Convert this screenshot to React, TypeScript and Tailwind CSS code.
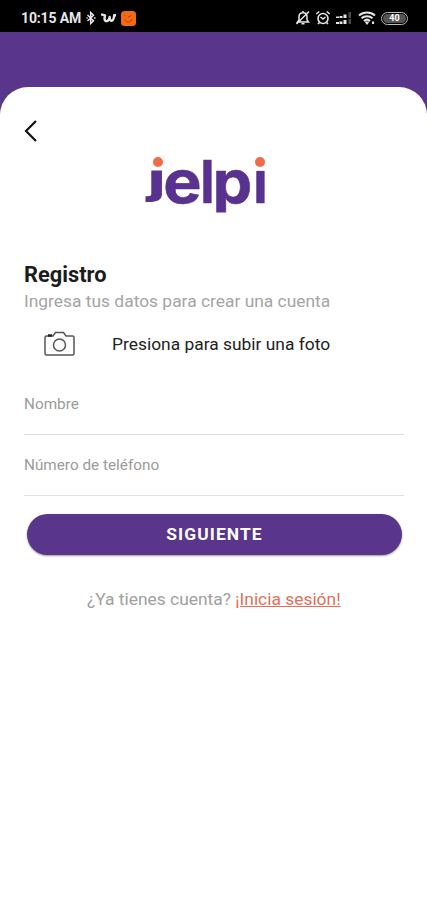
import React,{useState} from 'react';

const StatusBar:React.FC=()=>{
    return(
        <div className="flex h-8 items-center bg-black pt-1 pl-[21px] text-[#e6e6e6]">
            <div className="w-[60px] text-[14px] leading-none font-bold tracking-[-0.15px] whitespace-nowrap">10:15 AM</div>
            <svg className="ml-[5px] h-[14px] w-[10px]" viewBox="0 0 10 14" fill="none" stroke="currentColor" strokeWidth="1.5">
                <path d="M1.5 4l6 5.7L4.7 12.500V1.500L7.500 4.300L1.500 10M0.500 7h1.200M8 7h1.500"/>
            </svg>
            <svg className="ml-[5px] h-[10px] w-[15px]" viewBox="0 0 15 10" fill="none" stroke="currentColor" strokeWidth="2.400" strokeLinejoin="round">
                <path d="M0 1.300L4 2.300L3.500 5.500C3.500 9.500 8 9 8.700 4C8.500 9.300 12.500 9.300 13.200 2.300H15"/>
            </svg>
            <svg className="ml-[5px] h-[15px] w-[15px]" viewBox="0 0 15 15" fill="none">
                <rect width="15" height="15" rx="3.500" fill="#f26a13"/>
                <path d="M3.800 5.200v-1M4 8.500c1 3.500 6 3.500 7-.5M7 6.500l3.500-2.300" stroke="#a83c08" strokeWidth="1"/>
            </svg>
            <svg className="ml-[159px] h-4 w-4" viewBox="0 0 16 16" fill="none" stroke="currentColor" strokeWidth="1.500">
                <path d="M2.500 12h11L12 10V6.500C12 4 10.500 2.700 8 2.700S4 4 4 6.500V10zM6.500 13.700h3M8 1v1.500M1.500 14L14 1.500"/>
            </svg>
            <svg className="ml-1 h-4 w-4" viewBox="0 0 16 16" fill="none" stroke="currentColor" strokeWidth="1.600">
                <circle cx="8" cy="8.500" r="5"/>
                <path d="M5.500 7L8 9l2.500-2M1.300 4l3-2.500M14.700 4l-3-2.500M4.500 12.500L3 14M11.500 12.500L13 14"/>
            </svg>
            <svg className="ml-[5px] h-4 w-4" viewBox="0 0 16 16" fill="currentColor">
                <path d="M0 6.500h3V8H0zM3.500 6h3v2h-3zM7.500 4.500h3V8h-3zM0 12h3v2H0zM3.500 11.500h3V14h-3zM7.500 10h3v4h-3z"/>
                <path d="M12.500 2H15v6h-2.500zM12.500 9H15v5h-2.500z" fill="#4b4b4b"/>
            </svg>
            <svg className="ml-1.5 h-4 w-[18px]" viewBox="0 0 18 16" fill="none" stroke="currentColor" strokeWidth="2">
                <path d="M1 5.500c4.500-4 11.500-4 16 0M3.500 8.300c3-2.800 8-2.800 11 0M6 11c1.800-1.600 4.200-1.600 6 0"/>
                <path d="M6.500 11.500L9 15l2.500-3.500zM14 11.500h2V14h-2z" fill="currentColor" stroke="none"/>
            </svg>
            <div className="ml-[5px] flex h-[13px] w-[27px] items-center justify-center rounded-full border-[1.5px] border-[#bdbdbd] p-px">
                <div className="flex h-full w-full items-center justify-center rounded-full bg-[#555555] text-[9px] leading-none font-bold text-white">40</div>
            </div>
        </div>
    )
}

const Logo:React.FC=()=>{
    return(
        <svg className="h-[70px] w-[124px]" viewBox="144 155 124 70" role="img" aria-label="jelpi">
            <g className="fill-[#59318f] stroke-[#59318f] font-['Inter'] text-[59px] font-semibold" strokeWidth="0.600">
                <text transform="translate(148 193) scale(1.120 .7)" strokeWidth="2">j</text>
                <text transform="translate(163.200 202.700) scale(1.090 1)" className="font-bold">e</text>
                <text x="199.700" y="202.700">l</text>
                <text transform="translate(212.800 202.700) scale(1.060 1)" className="font-bold">p</text>
                <text x="252.700" y="202.700">i</text>
            </g>
            <path d="M144 155h22v15.500h-22zM253 155h15v15.500h-15zM212 212.500h16V225h-16z" fill="#ffffff"/>
            <circle cx="158" cy="162" r="5" fill="#f26a48"/>
            <circle cx="260" cy="162" r="5" fill="#f26a48"/>
        </svg>
    )
}

const App:React.FC=()=>{
    const [name,setName] = useState<string>("")
    const [phone,setPhone] = useState<string>("")

    const onRegister=(e: React.FormEvent<HTMLFormElement>)=>{
        e.preventDefault();
    }

    return(
        <div className="flex h-[900px] w-[427px] flex-col bg-[#59368c] font-['Roboto',sans-serif]">
            <StatusBar/>
            <div className="mt-[55px] flex flex-1 flex-col rounded-t-[28px] bg-white px-6">
                <button className="mt-8 h-6 w-4" aria-label="Atrás">
                    <svg className="h-6 w-4" viewBox="0 0 16 24" fill="none" stroke="#111111" strokeWidth="2.200">
                        <path d="M12 2L2 12l10 10"/>
                    </svg>
                </button>
                <div className="mt-3 ml-[120px]">
                    <Logo/>
                </div>
                <h1 className="mt-[38px] text-[21.8px] leading-6 font-bold text-[#1c1c1c]">Registro</h1>
                <p className="mt-1 text-[17.4px] leading-5 whitespace-nowrap text-[#a5a5a5]">Ingresa tus datos para crear una cuenta</p>
                <button className="mt-[19px] flex h-7 items-center pl-5">
                    <svg className="h-[26px] w-8" viewBox="0 0 32 26" fill="none" stroke="#555555" strokeWidth="1.500">
                        <path d="M2.500 5H9l2.500-3.500h8L22 5h6.500c1 0 1.500.5 1.500 1.500v16c0 1-.5 1.500-1.500 1.500h-26C1.500 24 1 23.500 1 22.500v-16C1 5.500 1.500 5 2.500 5z"/>
                        <circle cx="15.500" cy="14" r="6"/>
                        <path d="M4 4.500h4" stroke="#222222" strokeWidth="2.500"/>
                    </svg>
                    <span className="ml-9 text-[17.4px] leading-5 whitespace-nowrap text-[#222222]">Presiona para subir una foto</span>
                </button>
                <form className="flex flex-col" onSubmit={onRegister}>
                    <input className="mt-[33px] mr-[-1px] h-11 border-b border-[#dedede] pb-[17px] text-[15.3px] text-[#333333] outline-none placeholder:text-[#9b9b9b]" type="text" placeholder="Nombre" value={name} onChange={(e:React.ChangeEvent<HTMLInputElement>)=>setName(e.target.value)}/>
                    <input className="mt-[17px] mr-[-1px] h-11 border-b border-[#dedede] pb-[17px] text-[15.3px] text-[#333333] outline-none placeholder:text-[#9b9b9b]" type="tel" placeholder="Número de teléfono" value={phone} onChange={(e:React.ChangeEvent<HTMLInputElement>)=>setPhone(e.target.value)}/>
                    <button className="mt-[18px] mr-px ml-[3px] h-[41px] rounded-full bg-[#59368c] text-[17.4px] font-bold tracking-[1.1px] text-white shadow-[0_1px_2px_rgba(0,0,0,0.4)]">SIGUIENTE</button>
                </form>
                <p className="mt-[34px] ml-[63px] text-[17.4px] leading-5 whitespace-nowrap text-[#a0a0a0]">¿Ya tienes cuenta? <a className="text-[#e0705a] underline" href="#">¡Inicia sesión!</a></p>
            </div>
        </div>
    )
}

export default App;
